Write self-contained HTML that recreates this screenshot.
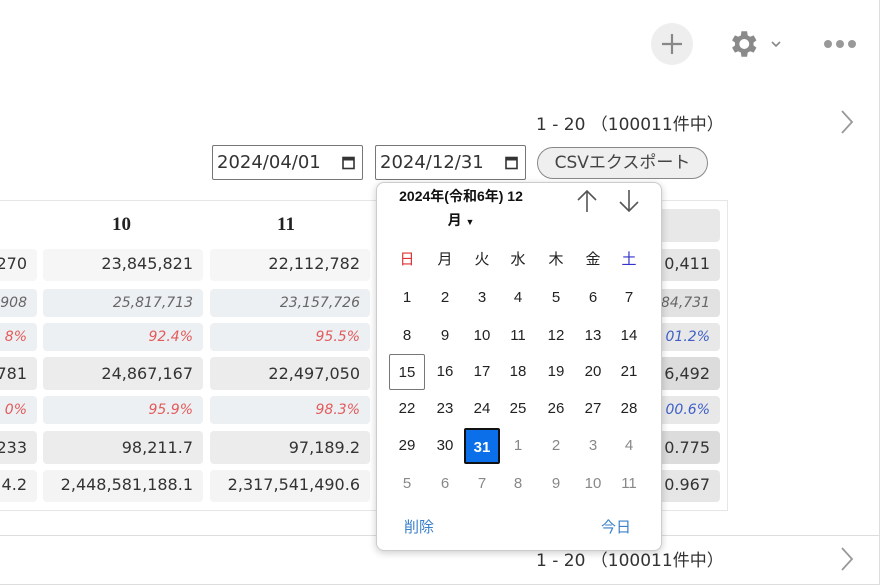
<!DOCTYPE html>
<html><head><meta charset="utf-8"><style>
*{box-sizing:border-box;margin:0;padding:0}
body{width:880px;height:585px;background:#fff;font-family:"DejaVu Sans","Noto Sans CJK JP",sans-serif;position:relative;overflow:hidden;color:#333}
.abs{position:absolute}
.frame{position:absolute;left:0;top:0;width:880px;height:585px;border:1px solid #ddd;border-left:none;border-top:none}
.cell{position:absolute;border-radius:4px;text-align:right;padding-right:10px;font-size:16px;line-height:30px;white-space:nowrap;overflow:hidden;direction:rtl}
.hdr{position:absolute;font-family:"Liberation Serif",serif;font-weight:bold;font-size:19px;color:#222}
.it{font-style:italic;font-size:14px;color:#666}
.red{color:#e25b5b}
.blu{color:#4060c8}
.inp{position:absolute;top:145px;height:35px;border:1px solid #767676;border-radius:2px;font-size:18px;color:#333;line-height:33px;padding-left:4px;white-space:nowrap}
.cal{position:absolute;left:376px;top:182px;width:286px;height:369px;background:#fff;border:1px solid #ccc;border-radius:8px;box-shadow:0 2px 8px rgba(0,0,0,.2)}
.d{position:absolute;width:36px;height:36px;text-align:center;line-height:36px;font-size:15px;color:#222;font-family:"Liberation Sans","Noto Sans CJK JP",sans-serif}
.g{color:#888}
.pg{position:absolute;left:536px;font-size:17px;color:#333;white-space:nowrap}
</style></head><body>
<div class="frame"></div>
<div class="abs" style="left:651px;top:23px;width:42px;height:42px;border-radius:50%;background:#eee"></div>
<svg class="abs" style="left:651px;top:23px" width="42" height="42"><path d="M21 11v20M11 21h20" stroke="#888" stroke-width="2.2"/></svg>
<svg class="abs" style="left:726px;top:27px" width="34" height="34" viewBox="0 0 24 24"><path fill="#8a8a8a" d="M19.4 13a7.5 7.5 0 000-2l2.1-1.6-2-3.5-2.5 1a7.3 7.3 0 00-1.7-1L14.9 3h-4l-.4 2.9a7.3 7.3 0 00-1.7 1l-2.5-1-2 3.5L6.4 11a7.5 7.5 0 000 2l-2.1 1.6 2 3.5 2.5-1c.5.4 1.1.7 1.7 1l.4 2.9h4l.4-2.9c.6-.3 1.2-.6 1.7-1l2.5 1 2-3.5zM12.9 15.5a3.5 3.5 0 110-7 3.5 3.5 0 010 7z"/></svg>
<svg class="abs" style="left:770px;top:39px" width="12" height="10"><path d="M2 3l4 4 4-4" stroke="#888" stroke-width="1.6" fill="none"/></svg>
<svg class="abs" style="left:822px;top:36px" width="36" height="16"><circle cx="6" cy="8" r="4" fill="#999"/><circle cx="18" cy="8" r="4" fill="#999"/><circle cx="30" cy="8" r="4" fill="#999"/></svg>
<div class="pg" style="top:110px">1 - 20 （100011件中）</div>
<svg class="abs" style="left:838px;top:108px" width="18" height="28"><path d="M4 3l10 11-10 11" stroke="#999" stroke-width="1.8" fill="none"/></svg>
<div class="pg" style="top:546px">1 - 20 （100011件中）</div>
<svg class="abs" style="left:838px;top:545px" width="18" height="28"><path d="M4 3l10 11-10 11" stroke="#999" stroke-width="1.8" fill="none"/></svg>
<div class="abs" style="left:0;top:535px;width:880px;height:1px;background:#ddd"></div>
<div class="inp" style="left:212px;width:151px">2024/04/01<svg style="position:absolute;right:7px;top:10px" width="13" height="14"><rect x="1" y="1.5" width="11" height="11" fill="none" stroke="#333" stroke-width="1.6"/><rect x="1" y="1.5" width="11" height="3" fill="#333"/></svg></div>
<div class="inp" style="left:375px;width:151px">2024/12/31<svg style="position:absolute;right:7px;top:10px" width="13" height="14"><rect x="1" y="1.5" width="11" height="11" fill="none" stroke="#333" stroke-width="1.6"/><rect x="1" y="1.5" width="11" height="3" fill="#333"/></svg></div>
<div class="abs" style="left:537px;top:147px;width:171px;height:32px;border:1px solid #888;border-radius:16px;background:#efefef;font-size:17px;line-height:30px;text-align:center;color:#444;white-space:nowrap">CSVエクスポート</div>
<div class="abs" style="left:-2px;top:200px;width:730px;height:311px;border:1px solid #e6e6e6"></div>
<div class="hdr" style="left:112px;top:214px">10</div>
<div class="hdr" style="left:277px;top:214px">11</div>
<div class="cell" style="left:650px;top:209px;width:70px;height:33px;background:#e8e8e8"></div>

<div class="cell" style="left:-10px;top:249px;width:47px;height:32px;background:#f6f6f6">270</div>
<div class="cell" style="left:43px;top:249px;width:160px;height:32px;background:#f6f6f6">23,845,821</div>
<div class="cell" style="left:210px;top:249px;width:160px;height:32px;background:#f6f6f6">22,112,782</div>
<div class="cell" style="left:650px;top:249px;width:70px;height:32px;background:#e6e6e6">0,411</div>

<div class="cell it" style="left:-10px;top:289px;width:47px;height:28px;line-height:28px;background:#edf0f3">908</div>
<div class="cell it" style="left:43px;top:289px;width:160px;height:28px;line-height:28px;background:#edf0f3">25,817,713</div>
<div class="cell it" style="left:210px;top:289px;width:160px;height:28px;line-height:28px;background:#edf0f3">23,157,726</div>
<div class="cell it" style="left:650px;top:289px;width:70px;height:28px;line-height:28px;background:#e2e2e2">84,731</div>

<div class="cell it red" style="left:-10px;top:323px;width:47px;height:28px;line-height:28px;background:#edf0f3">8%</div>
<div class="cell it red" style="left:43px;top:323px;width:160px;height:28px;line-height:28px;background:#edf0f3">92.4%</div>
<div class="cell it red" style="left:210px;top:323px;width:160px;height:28px;line-height:28px;background:#edf0f3">95.5%</div>
<div class="cell it blu" style="left:650px;top:323px;width:70px;height:28px;line-height:28px;background:#e8e8e8">01.2%</div>

<div class="cell" style="left:-10px;top:357px;width:47px;height:33px;line-height:33px;background:#ececec">781</div>
<div class="cell" style="left:43px;top:357px;width:160px;height:33px;line-height:33px;background:#ececec">24,867,167</div>
<div class="cell" style="left:210px;top:357px;width:160px;height:33px;line-height:33px;background:#ececec">22,497,050</div>
<div class="cell" style="left:650px;top:357px;width:70px;height:33px;line-height:33px;background:#dcdcdc">6,492</div>

<div class="cell it red" style="left:-10px;top:396px;width:47px;height:28px;line-height:28px;background:#edf0f3">0%</div>
<div class="cell it red" style="left:43px;top:396px;width:160px;height:28px;line-height:28px;background:#edf0f3">95.9%</div>
<div class="cell it red" style="left:210px;top:396px;width:160px;height:28px;line-height:28px;background:#edf0f3">98.3%</div>
<div class="cell it blu" style="left:650px;top:396px;width:70px;height:28px;line-height:28px;background:#e8e8e8">00.6%</div>

<div class="cell" style="left:-10px;top:431px;width:47px;height:33px;line-height:33px;background:#ececec">233</div>
<div class="cell" style="left:43px;top:431px;width:160px;height:33px;line-height:33px;background:#ececec">98,211.7</div>
<div class="cell" style="left:210px;top:431px;width:160px;height:33px;line-height:33px;background:#ececec">97,189.2</div>
<div class="cell" style="left:650px;top:431px;width:70px;height:33px;line-height:33px;background:#dcdcdc">0.775</div>

<div class="cell" style="left:-10px;top:470px;width:47px;height:32px;background:#f4f4f4">4.2</div>
<div class="cell" style="left:43px;top:470px;width:160px;height:32px;background:#f4f4f4">2,448,581,188.1</div>
<div class="cell" style="left:210px;top:470px;width:160px;height:32px;background:#f4f4f4">2,317,541,490.6</div>
<div class="cell" style="left:650px;top:470px;width:70px;height:32px;background:#e6e6e6">0.967</div>

<div class="cal">
<div class="abs" style="left:4px;top:1px;width:160px;font-family:'Liberation Sans','Noto Sans CJK JP',sans-serif;font-size:14px;font-weight:bold;line-height:24px;text-align:center;color:#111;white-space:nowrap">2024年(令和6年) 12<br>月 <span style="font-size:9px">▼</span></div>
<svg class="abs" style="left:198px;top:5px" width="24" height="26"><path d="M12 3v21M3 12l9-9 9 9" stroke="#555" stroke-width="1.6" fill="none"/></svg>
<svg class="abs" style="left:240px;top:5px" width="24" height="26"><path d="M12 2v21M3 14l9 9 9-9" stroke="#555" stroke-width="1.6" fill="none"/></svg>
</div>
<div id="grid"></div>
<div class="abs" style="left:404px;top:516px;font-size:15px;color:#3a80c8">削除</div>
<div class="abs" style="left:601px;top:516px;font-size:15px;color:#3a80c8">今日</div>
<script>
var xs=[407,445,482,518,556,593,629],ys=[260,298,336,372,409,446,484];
var hd=['日','月','火','水','木','金','土'];
var days=[1,2,3,4,5,6,7,8,9,10,11,12,13,14,15,16,17,18,19,20,21,22,23,24,25,26,27,28,29,30,31,1,2,3,4,5,6,7,8,9,10,11];
var h='';
for(var i=0;i<7;i++){h+='<div class="d" style="left:'+(xs[i]-18)+'px;top:'+(ys[0]-18)+'px;color:'+(i==0?'#d33':i==6?'#33c':'#222')+'">'+hd[i]+'</div>';}
for(var k=0;k<42;k++){var r=Math.floor(k/7)+1,c=k%7;var st='left:'+(xs[c]-18)+'px;top:'+(ys[r]-18)+'px;';var cl='d';
if(k>30)cl+=' g';
if(k==14)st+='border:1px solid #777;border-radius:2px;';
if(k==30)st+='background:#0a6fe8;color:#fff;font-weight:bold;border:2px solid #111;border-radius:2px;';
h+='<div class="'+cl+'" style="'+st+'">'+days[k]+'</div>';}
document.getElementById('grid').innerHTML=h;
</script>
</body></html>
